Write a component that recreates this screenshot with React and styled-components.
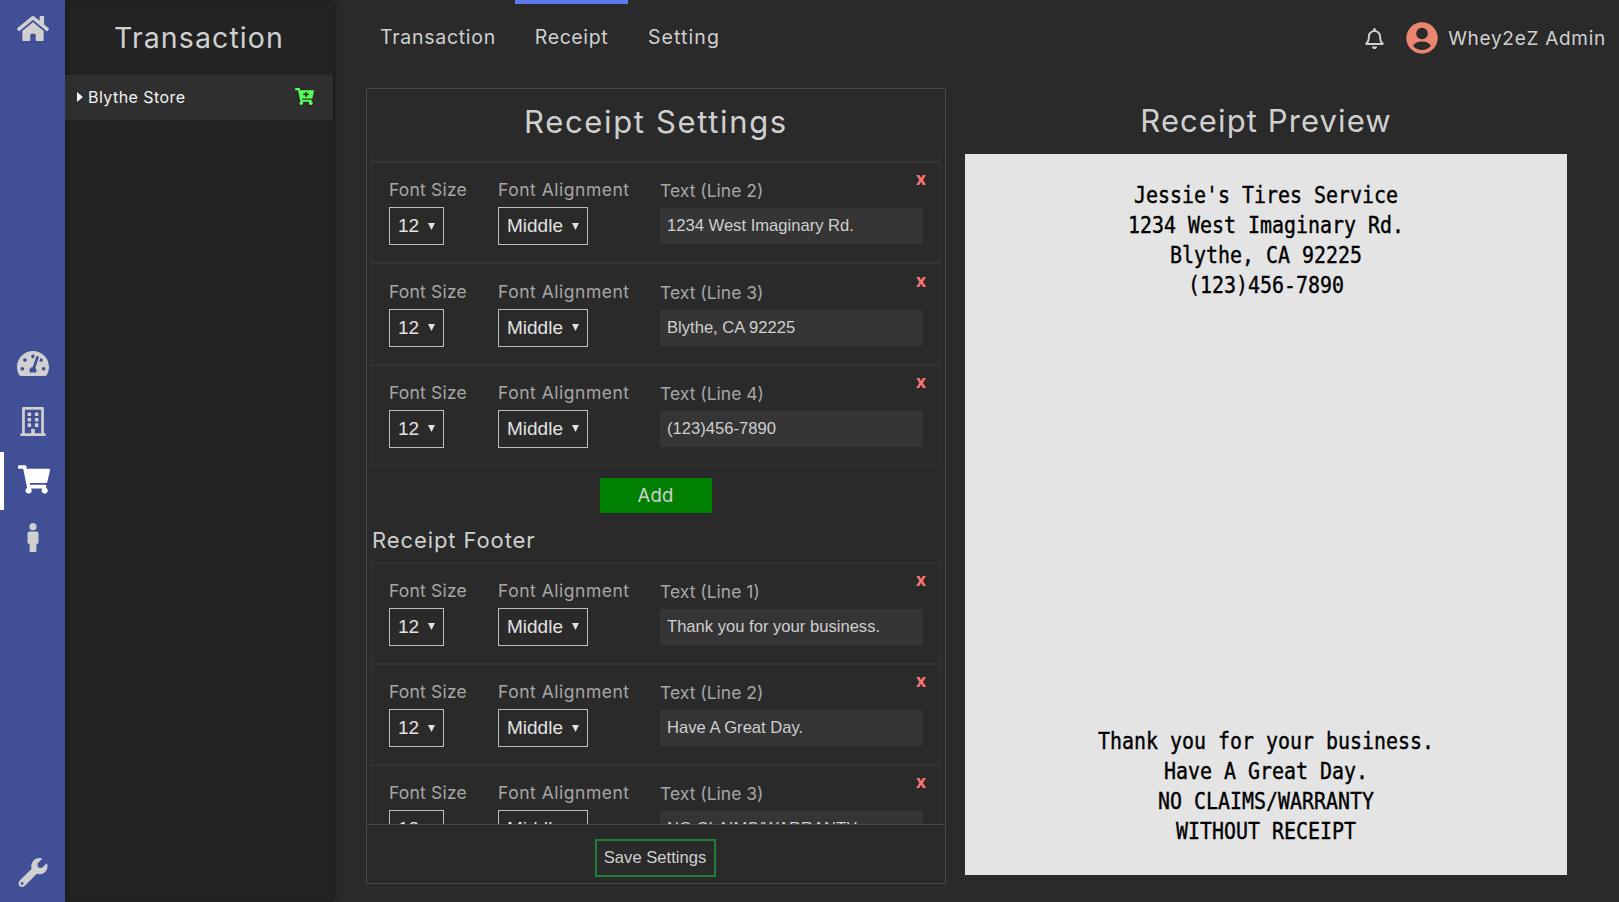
import React from "react";
import styled, { createGlobalStyle } from "styled-components";
import {
  FaHome,
  FaTachometerAlt,
  FaRegBuilding,
  FaShoppingCart,
  FaWrench,
  FaCartPlus,
  FaRegBell,
} from "react-icons/fa";

const GlobalStyle = createGlobalStyle`
  * { box-sizing: border-box; }
  body {
    margin: 0;
    background: #2a2a2a;
    color: #d0d0d0;
    font-family: Inter, "Liberation Sans", sans-serif;
    overflow: hidden;
  }
  button { font: inherit; color: inherit; padding: 0; margin: 0; border: 0; background: none; }
`;

const Page = styled.div`
  display: flex;
  width: 1619px;
  height: 902px;
`;

const Rail = styled.nav`
  display: flex;
  flex-direction: column;
  width: 65px;
  background: #414f97;
`;

const RailItem = styled.button`
  display: flex;
  align-items: center;
  justify-content: center;
  width: 65px;
  height: 58px;
  border-left: 4px solid ${(p) => (p.$active ? "#fff" : "transparent")};
  padding-right: ${(p) => (p.$active ? 1 : 4)}px;
  color: ${(p) => (p.$active ? "#fff" : "#d0d0d0")};
  svg { height: 29px; width: 32px; }
`;

const RailMiddle = styled.div`
  display: flex;
  flex-direction: column;
  margin: 279px 0 275px;
  ${RailItem} { padding-bottom: 3px; }
`;

const HomeItem = styled(RailItem)`
  height: 57px;
  padding-bottom: 1px;
`;

const StoreColumn = styled.aside`
  width: 268px;
  background: #232323;
  box-shadow: 5px 0 5px -4px rgba(0, 0, 0, 0.5), inset 5px 0 6px -4px rgba(0, 0, 0, 0.4);
`;

const StoreTitle = styled.h1`
  margin: 0;
  height: 75px;
  text-align: center;
  font-size: 28.5px;
  font-weight: 400;
  line-height: 76px;
  letter-spacing: 1.1px;
`;

const StoreRow = styled.div`
  display: flex;
  align-items: center;
  height: 45px;
  padding: 0 19px 2px 12px;
  background: #2f2f2f;
  color: #f4f4f4;
  font-size: 16px;
  letter-spacing: 0.45px;
  > span { flex: 1; padding-left: 5px; }
`;

const AddCart = styled(FaCartPlus)`
  width: 19px;
  height: 17px;
  color: #5f5;
`;

const Main = styled.main`
  flex: 1;
  display: flex;
  flex-direction: column;
`;

const TopBar = styled.header`
  display: flex;
  justify-content: space-between;
  height: 88px;
  padding: 0 13px 0 28px;
`;

const Tabs = styled.div`
  display: flex;
`;

const Tab = styled.button`
  width: ${(p) => p.$width}px;
  height: 75px;
  border-top: 4px solid ${(p) => (p.$active ? "#5e79ee" : "transparent")};
  padding-bottom: 6px;
  font-size: 19.5px;
  letter-spacing: ${(p) => p.$spacing}px;
`;

const Account = styled.div`
  display: flex;
  align-items: center;
  height: 75px;
  padding-top: 1px;
  font-size: 19px;
  letter-spacing: 0.72px;
`;

const Bell = styled(FaRegBell)`
  width: 19px;
  height: 21px;
  margin-right: 22px;
`;

const Avatar = styled.svg`
  width: 32px;
  height: 32px;
  margin-right: 10px;
`;

const Content = styled.div`
  display: flex;
  padding-left: 33px;
`;

const SettingsPanel = styled.section`
  display: flex;
  flex-direction: column;
  width: 580px;
  height: 796px;
  border: 1px solid #4a4a4a;
`;

const PanelTitle = styled.h2`
  margin: 0;
  height: 66px;
  text-align: center;
  font-size: 31px;
  font-weight: 400;
  line-height: 66px;
  letter-spacing: ${(p) => p.$spacing}px;
`;

const Scroller = styled.div`
  height: 669px;
  padding: 0 5px 0 4px;
  overflow: hidden;
`;

const LineList = styled.div`
  display: flex;
  flex-direction: column;
`;

const CardTail = styled.div`
  height: 7px;
  border: 1px solid #353535;
  border-top: 0;
`;

const LineCard = styled.div`
  display: flex;
  flex: none;
  height: 101.33px;
  padding: 15.33px 0 0 17px;
  border: 1px solid #353535;
`;

const Field = styled.label`
  display: flex;
  flex-direction: column;
  width: ${(p) => p.$width}px;
`;

const FieldName = styled.span`
  height: 29px;
  line-height: 24px;
  padding-top: ${(p) => (p.$low ? 1 : 0)}px;
  color: #a6a6a6;
  font-size: 17.5px;
  white-space: nowrap;
  letter-spacing: ${(p) => p.$spacing}px;
`;

const SelectBox = styled.span`
  display: flex;
  align-items: center;
  justify-content: space-between;
  width: ${(p) => p.$width}px;
  height: 38px;
  padding: 0 8px;
  border: 1px solid #bdbdbd;
  color: #e2e2e2;
  font-family: "Liberation Sans", Arial, sans-serif;
  font-size: 19px;
`;

const TextInput = styled.input`
  width: 263px;
  height: 36px;
  margin-top: 1px;
  padding: 0 7px;
  border: 0;
  border-radius: 2px;
  background: #353535;
  color: #cfcfcf;
  font-family: "Liberation Sans", Arial, sans-serif;
  font-size: 16.6px;
`;

const RemoveButton = styled.button`
  width: 20px;
  height: 20px;
  margin: -9px 0 0 -12px;
  color: #ff7474;
  font-size: 18px;
  font-weight: 700;
  line-height: 20px;
`;

const AddButton = styled.button`
  display: block;
  width: 112px;
  height: 35px;
  margin: 12px auto 0;
  border-radius: 1px;
  background: #008000;
  font-size: 18.5px;
  letter-spacing: 0.2px;
`;

const GroupTitle = styled.h3`
  margin: 12.4px 0 0 1px;
  height: 37px;
  font-size: 22px;
  font-weight: 400;
  line-height: 31px;
  letter-spacing: 0.9px;
`;

const PanelFooter = styled.div`
  display: flex;
  justify-content: center;
  padding: 14px 2px 0 0;
  border-top: 1px solid #4a4a4a;
`;

const SaveButton = styled.button`
  width: 121px;
  height: 38px;
  border: 2px solid #1f7f38;
  font-family: "Liberation Sans", Arial, sans-serif;
  font-size: 16.6px;
`;

const Preview = styled.section`
  width: 602px;
  margin-left: 19px;
`;

const Paper = styled.div`
  display: flex;
  flex-direction: column;
  justify-content: space-between;
  height: 721px;
  padding: 27px 0 28px;
  background: #e4e4e4;
`;

const PrintLine = styled.div`
  height: 30px;
  color: #000;
  text-align: center;
  font-family: "DejaVu Sans Mono", monospace;
  font-size: 19.93px;
  line-height: 30px;
  white-space: pre;
  transform: scaleY(1.15);
  -webkit-text-stroke: 0.35px #000;
`;

const headerLines = ["Jessie's Tires Service", "1234 West Imaginary Rd.", "Blythe, CA 92225", "(123)456-7890"];
const footerLines = ["Thank you for your business.", "Have A Great Day.", "NO CLAIMS/WARRANTY", "WITHOUT RECEIPT"];

function Caret() {
  return (
    <svg width="7" height="7" viewBox="0 0 7 7">
      <path d="M0 0h7L3.5 7z" fill="#e2e2e2" />
    </svg>
  );
}

function PersonIcon() {
  return (
    <svg viewBox="0 0 32 29" fill="currentColor">
      <circle cx="16" cy="3.7" r="3.6" />
      <path d="M13 8.5h6a2.500 2.500 0 0 1 2.500 2.500v8.500a1.200 1.200 0 0 1-1.200 1.200H19.400v7a1.300 1.300 0 0 1-1.300 1.300h-4.200a1.300 1.300 0 0 1-1.300-1.300v-7H11.700a1.200 1.200 0 0 1-1.200-1.200V11A2.500 2.500 0 0 1 13 8.500z" />
    </svg>
  );
}

function LineEditor({ index, text }) {
  return (
    <LineCard>
      <Field $width={109}>
        <FieldName $spacing={0.2}>Font Size</FieldName>
        <SelectBox $width={55}>12<Caret /></SelectBox>
      </Field>
      <Field $width={162}>
        <FieldName $spacing={0.52}>Font Alignment</FieldName>
        <SelectBox $width={90}>Middle<Caret /></SelectBox>
      </Field>
      <Field $width={263}>
        <FieldName $low $spacing={0}>Text (Line {index})</FieldName>
        <TextInput defaultValue={text} />
      </Field>
      <RemoveButton>x</RemoveButton>
    </LineCard>
  );
}

export default function App() {
  return (
    <Page>
      <GlobalStyle />
      <Rail>
        <HomeItem><FaHome /></HomeItem>
        <RailMiddle>
          <RailItem><FaTachometerAlt /></RailItem>
          <RailItem><FaRegBuilding /></RailItem>
          <RailItem $active><FaShoppingCart /></RailItem>
          <RailItem><PersonIcon /></RailItem>
        </RailMiddle>
        <RailItem><FaWrench /></RailItem>
      </Rail>
      <StoreColumn>
        <StoreTitle>Transaction</StoreTitle>
        <StoreRow>
          <svg width="6" height="10" viewBox="0 0 6 10"><path d="M0 0l6 5-6 5z" fill="#f4f4f4" /></svg>
          <span>Blythe Store</span>
          <AddCart />
        </StoreRow>
      </StoreColumn>
      <Main>
        <TopBar>
          <Tabs>
            <Tab $width={154} $spacing={0.72}>Transaction</Tab>
            <Tab $width={113} $active $spacing={0.6}>Receipt</Tab>
            <Tab $width={112} $spacing={1.1}>Setting</Tab>
          </Tabs>
          <Account>
            <Bell />
            <Avatar viewBox="0 0 32 32">
              <circle cx="16" cy="16" r="15.7" fill="#ea8570" />
              <circle cx="16" cy="11.5" r="5.8" fill="#2a2a2a" />
              <path d="M7 23.8c1.6-2.8 5.1-4.3 9-4.3s7.4 1.5 9 4.3c-2 2.6-5.3 4.2-9 4.2s-7-1.6-9-4.2z" fill="#2a2a2a" />
            </Avatar>
            Whey2eZ Admin
          </Account>
        </TopBar>
        <Content>
          <SettingsPanel>
            <PanelTitle $spacing={1.65}>Receipt Settings</PanelTitle>
            <Scroller>
              <LineList>
                <CardTail />
                {headerLines.slice(1).map((text, i) => <LineEditor key={text} index={i + 2} text={text} />)}
              </LineList>
              <AddButton>Add</AddButton>
              <GroupTitle>Receipt Footer</GroupTitle>
              <LineList>
                {footerLines.slice(0, 3).map((text, i) => <LineEditor key={text} index={i + 1} text={text} />)}
              </LineList>
            </Scroller>
            <PanelFooter><SaveButton>Save Settings</SaveButton></PanelFooter>
          </SettingsPanel>
          <Preview>
            <PanelTitle $spacing={1.1}>Receipt Preview</PanelTitle>
            <Paper>
              <div>{headerLines.map((text) => <PrintLine key={text}>{text}</PrintLine>)}</div>
              <div>{footerLines.map((text) => <PrintLine key={text}>{text}</PrintLine>)}</div>
            </Paper>
          </Preview>
        </Content>
      </Main>
    </Page>
  );
}
